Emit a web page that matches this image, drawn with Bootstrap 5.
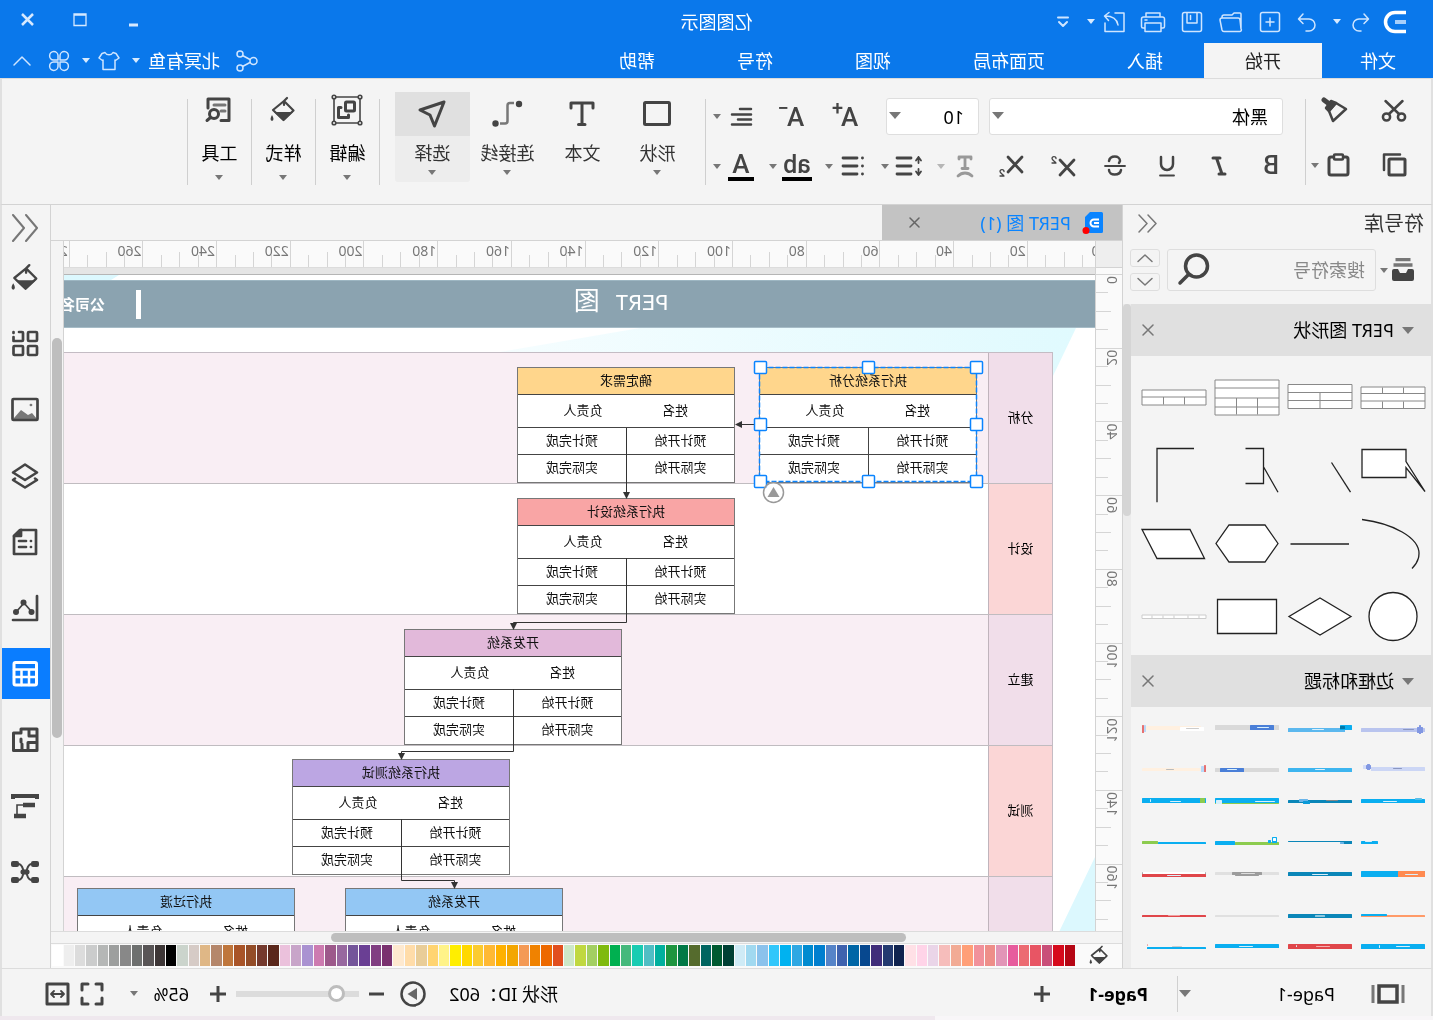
<!DOCTYPE html>
<html lang="zh-CN">
<head>
<meta charset="utf-8">
<meta name="viewport" content="width=device-width, initial-scale=1">
<title>亿图图示</title>
<link href="https://cdn.jsdelivr.net/npm/bootstrap@5.3.0/dist/css/bootstrap.min.css" rel="stylesheet">
<style>
:root{--blue:#0a78eb;--pane:#f4f4f4;--edge:#d3d3d3;--ink:#444}
body{font-family:"Noto Sans","Noto Sans CJK SC",sans-serif;font-size:18px;line-height:24px;color:#111;background:var(--pane);overflow:hidden}
/* the whole window is shown mirrored */
.window{height:100vh;transform:scaleX(-1)}
button,.tab-link{border:0;background:none;padding:0;color:inherit;display:flex;align-items:center;justify-content:center;text-decoration:none}
svg{display:block;flex:none}
.ic{fill:none;stroke:currentColor;stroke-width:2;stroke-linecap:round;stroke-linejoin:round}
.thin{stroke-width:1.5}
.caret{width:0;height:0;border:4px solid transparent;border-top:5px solid #777;border-bottom:0;flex:none}
.caret-lg{border-width:6px;border-top:7px solid #777;border-bottom:0}
.caret-w{border-top-color:#d8ebff;border-width:4px;border-top-width:5px;border-bottom:0}
.titlebar{height:43px;background:var(--blue);color:#cfe5ff}
.titlebar button{width:39px;height:34px}
.half{flex:1 1 0}
.app-title{color:#fff}
.tabbar{height:35px;background:var(--blue);color:#fff;line-height:36px}
.tab-link{padding:0 41px;height:35px;color:#fff}
.tab-link:first-child{padding:0 38px 0 37px}
.tab-link.current{background:var(--pane);color:#222}
.body-edge{border-left:2px solid #e0e0e0;border-right:2px solid #e0e0e0}
.ribbon{height:127px;border-top:1px solid #dcdcdc;border-bottom:1px solid var(--edge);background:var(--pane);color:var(--ink);flex:none}
.rule{width:1px;height:86px;margin-top:20px;background:#cfcfcf;flex:none}
.clip-row{height:54px}
.w74{width:74px}.w38{width:38px}.w46{width:46px}.w52{width:52px}.w54{width:54px}.w40{width:40px}
.clip-group{padding-top:5px;width:125px;flex:none}
.font-group{width:599px;padding:19px 0 0 8px;flex:none}
.font-row{height:37px;padding-left:14px}
.style-row{height:40px;margin-top:11px}
.pick{position:relative}
.pick select{appearance:none;width:100%;height:37px;border:1px solid #dedede;border-radius:3px;background:#fff;padding:0 14px;color:#000}
.pick .caret{position:absolute;right:3px;top:14px;pointer-events:none}
.glyph-a{font:500 26px/30px Roboto,sans-serif;color:var(--ink)}
.glyph-a sup{font-size:20px;top:-9px;left:-2px;line-height:0}
.glyph-b{font:500 25px/30px Roboto,sans-serif;color:var(--ink)}
.inkbar{border-bottom:4px solid #000;line-height:25px;padding:0 1px}
.big{width:75px;margin-top:13px;height:90px;flex-direction:column;justify-content:flex-start;color:#333}
.big .pic{height:44px;width:100%;display:flex;align-items:center;justify-content:center;color:var(--ink)}
.big .cap{margin:5px 0 5px}
.big.on{background:#ededed;border-radius:3px}
.big.on .pic{background:#e0e0e0}
.tall{width:63px;margin-top:9px;height:94px;color:#000}
.tall .cap{margin:9px 0 10px}
main{min-height:0}
.library{width:309px;border-right:1px solid var(--edge);flex:none;overflow:hidden}
.lib-head{height:37px;font-size:20px;padding:0 14px 0 7px;color:#333}
.lib-search{height:62px;padding:7px 0 0 16px;align-items:flex-start}
.search-box{width:209px;height:42px;border:1px solid #dedede;border-radius:3px}
.search-box input{width:164px;border:0;background:none;padding:0 10px;font-size:18px;color:#777;outline:0}
.search-box input::placeholder{color:#888}
.step{width:30px;height:18px;border:1px solid #dedede!important;border-radius:3px}
.lib-scroll{width:8px;background:#ececec}
.lib-scroll div{height:212px;background:#d5d5d5;border-radius:4px}
.sect{height:52px;background:#e0e0e0;color:#000;padding:0 11px 0 17px}
.shape-grid{display:grid;grid-template-columns:repeat(4,73px);grid-auto-rows:73px;padding:5px 0 2px 1px}
.frame-grid{display:grid;grid-template-columns:repeat(4,73px);grid-template-rows:41px 32px 41px 32px 41px 31px 24px;padding:9px 0 0 6px}
.doc-tabs{height:36px;border-bottom:1px solid var(--edge);flex:none}
.doc-tab{width:240px;background:#c3c3c3;color:#0a84ff;padding:0 27px 0 18px}
.doc-tab svg:first-child{margin-right:11px}
.ruler text{font:14px "Noto Sans",sans-serif;fill:#777}
.ruler path{stroke:#d5d5d5;fill:none}
.vruler{width:27px;background:#fafafa;border-right:1px solid var(--edge);flex:none;overflow:hidden}
.corner{height:27px;background:#eee;border-bottom:1px solid var(--edge)}
.hruler{height:27px;background:#fafafa;border-bottom:1px solid #dcdcdc;overflow:hidden;flex:none}
.work{min-height:0;min-width:0}
.board{background:#e5e5e5;padding-top:6px;overflow:hidden;position:relative;min-height:0}
.sheet{border-top:1px solid #b5b5b5;background:#fff;height:100%;padding-top:5px;position:relative}
.sheet-art{position:absolute;left:0;top:0}
.band{position:relative;height:48px;background:#8ba3b0;border-top:1px solid #9db6c2;border-bottom:1px solid #a6bcc7;color:#fff;display:grid;grid-template-columns:948px 6px 5px 31px auto;align-items:center;white-space:nowrap}
.band h1{font:26px/44px "Liberation Mono","Noto Sans CJK SC",monospace;margin:0;text-align:center}
.band h1 .lat{font-size:22px}
.band strong{font-size:15px}
.band-bar{height:29px;background:#fff}
.lanes{position:relative;margin:24px 0 0 42px;border-top:1px solid #c4bcc4;border-left:1px solid #c4bcc4}
.lane{height:131px;border-bottom:1px solid #c0bcc0;background:#fff}
.lane>div:first-child{width:64px;background:#fbd6d6;border-right:1px solid #c0b4bc;font-size:13px;color:#000;padding-bottom:3px}
.lane:nth-child(odd){background:#f9eef4}
.lane:nth-child(odd)>div:first-child{background:#f1deea}
.node{position:absolute;width:218px;border:1px solid #777;background:#fff;font-size:13px;line-height:24px;color:#111;text-align:center}
.node table{width:216px;table-layout:fixed;border-collapse:separate;border-spacing:0}
.node td,.node th{padding:0;font-weight:400;height:27px;border-bottom:1px solid #444;vertical-align:top}
.node .who td{height:33px;line-height:31px}
.node .who td:first-child{padding-left:10px}
.node .who td:last-child{padding-right:22px}
.node .span td:first-child{border-right:1px solid #444}
.node tr:last-child td{border-bottom:0}
.wires{position:absolute;left:0;top:0}
.vbar{width:13px;border-left:1px solid var(--edge);flex:none;padding:97px 1px 0}
.vbar div{height:400px;background:#bebebe;border-radius:5px}
.hbar{height:13px;border-top:1px solid #dcdcdc;border-bottom:1px solid #dcdcdc;padding:1px 0 0 216px;flex:none}
.hbar div{width:575px;height:9px;background:#bebebe;border-radius:5px}
.palette{height:24px;padding:1px 1px 2px 13px;background:#fafafa;flex:none}
.palette .inks{display:flex;gap:1px;flex:1;height:21px;margin-left:14px}
.inks button{flex:1}
.tools{width:49px;color:var(--ink);padding-top:6px;border-left:1px solid var(--edge);overflow:hidden;flex:none}
.tools button{width:48px;height:51px;margin-bottom:15px;padding-left:1px}
.tools button:first-child{height:34px;margin-bottom:7px;color:#777}
.tools .on{background:#0a7dff;color:#fff}
.status{height:48px;border-top:1px solid #dcdcdc;color:#000;padding-top:2px}
.status svg{color:var(--ink)}
.zoomer{appearance:none;width:123px;height:18px;background:linear-gradient(#dcdcdc,#dcdcdc) center/100% 6px no-repeat}
.zoomer::-webkit-slider-thumb{appearance:none;width:17px;height:17px;border-radius:50%;background:#fff;border:3px solid #bdbdbd}
.desk{height:4px;background:linear-gradient(90deg,#f8f6f8 498px,#efe8ee 498px)}
</style>
</head>
<body>
<div class="window d-flex flex-column">
<header class="flex-shrink-0">
 <div class="titlebar d-flex align-items-center">
  <div class="half d-flex align-items-center">
   <svg class="ms-4 me-1" width="26" height="26" viewBox="0 0 26 26" fill="none"><path d="M3 3.500H14a9.500 9.500 0 0 1 0 19H3" stroke="#fff" stroke-width="3.500"/><path d="M3 13H14" stroke="#a8d0fb" stroke-width="4"/></svg>
   <button aria-label="撤销" class="w-auto pe-1 ps-2"><svg class="ic thin" width="22" height="24" viewBox="0 0 22 24"><path d="M7 4 2.500 9 7 13.500M3 9H12a6 6 0 0 1 0 12H10"/></svg></button>
   <span class="caret caret-w mx-1"></span>
   <button aria-label="重做" class="ps-1"><svg class="ic thin" width="22" height="24" viewBox="0 0 22 24"><path d="M15 4 19.500 9 15 13.500M19 9H9a6 6 0 0 0 0 12H12"/></svg></button>
   <button aria-label="新建"><svg class="ic thin" width="22" height="22" viewBox="0 0 22 22"><rect x="1.500" y="1.500" width="19" height="19" rx="2"/><path d="M11 7v8M7 11h8"/></svg></button>
   <button aria-label="打开"><svg class="ic thin" width="24" height="22" viewBox="0 0 24 22"><path d="M2 18V3a1 1 0 0 1 1-1H9l2 2H19a2 2 0 0 1 2 2V7M2 18 3 9a2 2 0 0 1 2-2H21a2 2 0 0 1 2 2L21 19a2 2 0 0 1-2 1.500H3A1.500 1.500 0 0 1 2 18"/></svg></button>
   <button aria-label="保存"><svg class="ic thin" width="22" height="22" viewBox="0 0 22 22"><rect x="1.500" y="1.500" width="19" height="19" rx="2"/><path d="M6 2v10h10V2M12.500 4.500v4"/></svg></button>
   <button aria-label="打印"><svg class="ic thin" width="26" height="22" viewBox="0 0 26 22"><path d="M6 5V2H20V5M5 17H3a1.500 1.500 0 0 1-1.500-1.500V8a2 2 0 0 1 2-2H22.500a2 2 0 0 1 2 2V15.500A1.500 1.500 0 0 1 23 17H21M5 12H21V20.500H5zM19 9H21"/></svg></button>
   <button aria-label="导出"><svg class="ic thin" width="24" height="22" viewBox="0 0 24 22"><path d="M11 2H2V20.500H21V12M8 14C9 8 13 5 21 5M17 1.500 21.500 5 17.500 9.500"/></svg></button>
   <span class="caret caret-w"></span>
   <button aria-label="更多" class="ms-1"><svg class="ic" width="14" height="12" viewBox="0 0 14 12"><path d="M2 1.500H12M3 6 7 10 11 6"/></svg></button>
  </div>
  <div class="app-title">亿图图示</div>
  <div class="half d-flex align-items-center justify-content-end">
   <button class="me-3 pt-2 ps-2" aria-label="最小化"><svg width="12" height="12"><path d="M1 5H10" stroke="#d6e9ff" stroke-width="3"/></svg></button>
   <button aria-label="最大化" class="pb-1 ps-1"><svg width="14" height="14" fill="none" stroke="#d6e9ff"><path d="M1 1H13V12.500H1zM1 2H13" stroke-width="1.300"/></svg></button>
   <button aria-label="关闭" class="ms-3 me-2 pb-1"><svg width="13" height="13" stroke="#d6e9ff" stroke-width="2.500"><path d="M1 1 12 12M12 1 1 12"/></svg></button>
  </div>
 </div>
 <nav class="tabbar d-flex">
  <a class="tab-link" href="#">文件</a><a class="tab-link current" href="#">开始</a><a class="tab-link" href="#">插入</a><a class="tab-link" href="#">页面布局</a><a class="tab-link" href="#">视图</a><a class="tab-link" href="#">符号</a><a class="tab-link" href="#">帮助</a>
  <div class="ms-auto d-flex align-items-center me-2" style="color:#cfe5ff">
   <button aria-label="分享" class="me-3"><svg class="ic thin" width="22" height="22" viewBox="0 0 22 22"><circle cx="4.500" cy="11" r="3.500"/><circle cx="18" cy="4" r="3"/><circle cx="18" cy="18" r="3"/><path d="M8 9.500 15.500 5.500M8 12.500 15.500 16.500"/></svg></button>
   <button class="text-white me-2">北冥有鱼</button><span class="caret caret-w me-2"></span>
   <button aria-label="皮肤" class="mx-1"><svg class="ic thin" width="22" height="20" viewBox="0 0 22 20"><path d="M7 1.500C8.500 4.500 13.500 4.500 15 1.500L18 2.500 21 7 17.500 9.500 17 9V18.500H5V9L4.500 9.500 1 7 4 2.500z"/></svg></button>
   <span class="caret caret-w ms-1 me-2"></span>
   <button aria-label="应用" class="mx-1"><svg class="ic thin" width="22" height="22" viewBox="0 0 22 22"><path d="M10 10H5.500A4.200 4.200 0 1 1 10 5.500zM12 10V5.500A4.200 4.200 0 1 1 16.500 10zM10 12V16.500A4.200 4.200 0 1 1 5.500 12zM12 12H16.500A4.200 4.200 0 1 1 12 16.500z"/></svg></button>
   <button aria-label="收起功能区" class="ms-2 me-1 ps-1"><svg class="ic thin" width="20" height="12" viewBox="0 0 20 12"><path d="M2 10 10 2 18 10"/></svg></button>
  </div>
 </nav>
</header>

<div class="ribbon body-edge d-flex">
 <div class="clip-group">
  <div class="clip-row d-flex">
   <button class="w74" aria-label="剪切"><svg class="ic" style="stroke-width:2.500" width="26" height="26" viewBox="0 0 26 26"><circle cx="5.500" cy="19" r="3.600"/><circle cx="20.500" cy="19" r="3.600"/><path d="M4.500 3 18 16M21.500 3 8 16"/></svg></button>
   <button class="w46" aria-label="格式刷"><svg class="ic" style="stroke-width:2.500" width="28" height="28" viewBox="0 0 28 28"><path d="M2 12 12 6 19 14 15 24z"/><path d="M12 6 17 4 22 11 19 14z" fill="currentColor"/><path d="M20 6 24 3" style="stroke-width:5"/></svg></button>
  </div>
  <div class="clip-row d-flex align-items-center">
   <button class="w74" aria-label="复制"><svg class="ic" style="stroke-width:3" width="26" height="26" viewBox="0 0 26 26"><rect x="2" y="7" width="16" height="16" rx="1"/><path d="M7 2.500H23V18" style="stroke-width:2.500"/></svg></button>
   <button class="w38" aria-label="粘贴"><svg class="ic" style="stroke-width:3" width="26" height="26" viewBox="0 0 26 26"><rect x="3" y="5" width="19" height="18" rx="2"/><rect x="8" y="2.500" width="9" height="5" rx="1" fill="#f4f4f4" style="stroke-width:2.500"/></svg></button><span class="caret"></span>
  </div>
 </div>
 <div class="rule"></div>
 <div class="font-group">
  <div class="font-row d-flex align-items-center">
   <div class="pick" style="width:294px"><select aria-label="字体"><option>黑体</option></select><span class="caret caret-lg"></span></div>
   <div class="pick" style="width:93px;margin:0 13px 0 10px"><select aria-label="字号"><option>10</option></select><span class="caret caret-lg"></span></div>
   <button class="w54 glyph-a ps-1">A<sup>+</sup></button><button class="w54 glyph-a ps-1">A<sup>−</sup></button>
   <button class="w40 ms-1" aria-label="对齐"><svg class="ic" style="stroke-width:2.500" width="24" height="20" viewBox="0 0 24 20"><path d="M2 2H13M2 7.500H21M2 12.500H15M2 17.500H21"/></svg></button><span class="caret"></span>
  </div>
  <div class="style-row d-flex align-items-center">
   <button class="w52 glyph-b" aria-label="加粗">B</button>
   <button class="w52" aria-label="斜体"><svg class="ic" style="stroke-width:3" width="18" height="22" viewBox="0 0 18 22"><path d="M8 3H15M3 19H9M11.500 3 6 19"/></svg></button>
   <button class="w52" aria-label="下划线"><svg class="ic" style="stroke-width:2.500" width="18" height="24" viewBox="0 0 18 24"><path d="M3 3V10a6 6 0 0 0 12 0V3"/><path d="M2 21.500H16" style="stroke-width:1.800"/></svg></button>
   <button class="w52" aria-label="删除线"><svg class="ic" style="stroke-width:2.500" width="24" height="24" viewBox="0 0 24 24"><path d="M18 7C17 1 7 1 7 7L8 9M6 16C7 22 18 22 18 16"/><path d="M2 12H22" style="stroke-width:1.800"/></svg></button>
   <button class="w52" aria-label="上标"><svg class="ic" width="26" height="24" viewBox="0 0 26 24"><path d="M2 6 16 21M16 6 2 21" style="stroke-width:2.800"/><path style="stroke-width:1.300" d="M20 4.500C20 2 24 2 24 4.500 24 6 21 7.500 20 9H24"/></svg></button>
   <button class="w52" aria-label="下标"><svg class="ic" width="26" height="24" viewBox="0 0 26 24"><path style="stroke-width:2.800" d="M2 3 16 18M16 3 2 18"/><path style="stroke-width:1.300" d="M20 17.500C20 15 24 15 24 17.500 24 19 21 20.500 20 22H24"/></svg></button>
   <button class="w40" aria-label="文字方向" style="color:#999"><svg class="ic" style="stroke-width:2.800" width="20" height="24" viewBox="0 0 20 24"><path d="M4 5V3H16V5M10 3V14M7 14.500H13"/><path d="M3 22C7 18 13 18 17 22"/></svg></button><span class="caret me-2 opacity-50"></span>
   <button class="w40" aria-label="行距"><svg class="ic" style="stroke-width:2.800" width="28" height="22" viewBox="0 0 28 22"><path d="M12 3H26M12 11H26M12 19H26"/><path style="stroke-width:1.800" d="M2 5.500 4.500 2 7 5.500M4.500 2V8M2 16.500 4.500 20 7 16.500M4.500 20V14"/></svg></button><span class="caret me-2"></span>
   <button class="w40" aria-label="项目符号"><svg class="ic" style="stroke-width:2.800" width="24" height="22" viewBox="0 0 24 22"><path d="M8 3H22M8 11H22M8 19H22M2.500 3h.1M2.500 11h.1M2.500 19h.1"/></svg></button><span class="caret me-2"></span>
   <button class="w40" aria-label="突出显示"><span class="glyph-b inkbar" style="line-height:25px">ab</span></button><span class="caret me-2"></span>
   <button class="w40" aria-label="字体颜色"><span class="glyph-a inkbar px-1" style="line-height:25px">A</span></button><span class="caret"></span>
  </div>
 </div>
 <div class="rule"></div>
 <div class="d-flex flex-shrink-0" style="margin:0 15px 0 10px">
  <button class="big"><span class="pic"><svg class="ic" style="stroke-width:3" width="30" height="28" viewBox="0 0 30 28"><rect x="2.500" y="2.500" width="25" height="22" rx="1"/></svg></span><span class="cap">形状</span><span class="caret"></span></button>
  <button class="big"><span class="pic"><svg class="ic" style="stroke-width:3" width="28" height="28" viewBox="0 0 28 28"><path d="M3 8V3H25V8M14 3V24M11 24.500H17.500"/></svg></span><span class="cap">文本</span></button>
  <button class="big"><span class="pic"><svg width="32" height="28" viewBox="0 0 32 28" fill="none" stroke="#777" stroke-width="2.500"><path d="M9 3H13Q15.500 3 15.500 5.500V21Q15.500 23.500 18 23.500H23"/><g fill="#444" stroke="none"><circle cx="4" cy="4" r="3.200"/><circle cx="27.500" cy="23.500" r="3.200"/></g></svg></span><span class="cap">连接线</span><span class="caret"></span></button>
  <button class="big on"><span class="pic"><svg class="ic" style="stroke-width:3" width="30" height="30" viewBox="0 0 30 30"><path d="M3 3 27 11 17 16 12.500 27z"/></svg></span><span class="cap">选择</span><span class="caret"></span></button>
 </div>
 <div class="rule"></div>
 <button class="big tall"><span class="pic"><svg class="ic" style="stroke-width:1.600" width="32" height="32" viewBox="0 0 32 32"><path d="M3 3H29V29H3z"/><g fill="#f4f4f4"><circle cx="3" cy="3" r="1.800"/><circle cx="29" cy="3" r="1.800"/><circle cx="3" cy="29" r="1.800"/><circle cx="29" cy="29" r="1.800"/></g><g style="stroke-width:3"><rect x="8.500" y="8" width="9" height="9" rx="1"/><path d="M22 13.500H24.500V23.500H14.500V21"/></g></svg></span><span class="cap">编辑</span><span class="caret"></span></button>
 <div class="rule"></div>
 <button class="big tall"><span class="pic"><svg width="26" height="28" viewBox="0 0 26 28"><use href="#bucket"/></svg></span><span class="cap">样式</span><span class="caret"></span></button>
 <div class="rule"></div>
 <button class="big tall"><span class="pic"><svg class="ic" style="stroke-width:3" width="30" height="28" viewBox="0 0 30 28"><path d="M13 24.500H5V3H26V12"/><path d="M9 9H20M9 15H13" stroke="#777"/><circle cx="20" cy="18" r="4.500"/><path d="M23.500 21.500 27 24.500"/></svg></span><span class="cap">工具</span><span class="caret"></span></button>
 <div class="rule"></div>
</div>

<main class="body-edge d-flex flex-fill">
 <aside class="library d-flex flex-column">
  <div class="lib-head d-flex align-items-center justify-content-between flex-shrink-0">符号库<button aria-label="收起"><svg class="ic thin" style="stroke:#777" width="20" height="20" viewBox="0 0 20 20"><path d="M9 1 1 9.500 9 18M18 1 10 9.500 18 18"/></svg></button></div>
  <div class="lib-search d-flex flex-shrink-0">
   <button aria-label="符号库" style="height:42px"><svg width="24" height="24" viewBox="0 0 24 24"><path d="M4.500 1.500H19.500M2.500 7H21.500" stroke="#777" stroke-width="3.500"/><path d="M1 13a2 2 0 0 1 2-2H7L9 15H15L17 11H21a2 2 0 0 1 2 2V21a2 2 0 0 1-2 2H3a2 2 0 0 1-2-2z" fill="#444"/></svg></button>
   <span class="caret" style="margin:19px 4px 0 3px"></span>
   <div class="search-box d-flex align-items-center"><input aria-label="搜索符号" placeholder="搜索符号"><button aria-label="搜索"><svg class="ic" style="stroke:#444;stroke-width:3.500" width="36" height="36" viewBox="0 0 36 36"><circle cx="14.500" cy="14" r="11"/><path d="M22.500 22.500 31 31"/></svg></button></div>
   <div class="d-flex flex-column" style="gap:6px;margin-left:7px"><button class="step" aria-label="上"><svg class="ic thin" style="stroke:#777" width="18" height="10" viewBox="0 0 18 10"><path d="M2 8.500 9 2 16 8.500"/></svg></button><button class="step" aria-label="下"><svg class="ic thin" style="stroke:#777" width="18" height="10" viewBox="0 0 18 10"><path d="M2 1.500 9 8 16 1.500"/></svg></button></div>
  </div>
  <div class="d-flex work flex-fill">
   <div style="width:300px">
    <div class="sect d-flex align-items-center"><span class="caret caret-lg me-2"></span>PERT 图形状<button class="ms-auto" aria-label="关闭"><svg class="ic thin" style="stroke:#777" width="12" height="12"><path d="M1 1 11 11M11 1 1 11"/></svg></button></div>
    <div class="shape-grid" id="shapes"></div>
    <div class="sect d-flex align-items-center"><span class="caret caret-lg me-2"></span>边框和标题<button class="ms-auto" aria-label="关闭"><svg class="ic thin" style="stroke:#777" width="12" height="12"><path d="M1 1 11 11M11 1 1 11"/></svg></button></div>
    <div class="frame-grid" id="frames"></div>
   </div>
   <div class="lib-scroll"><div></div></div>
  </div>
 </aside>

 <section class="d-flex flex-column flex-fill work">
  <div class="doc-tabs d-flex">
   <div class="doc-tab d-flex align-items-center"><svg width="22" height="24" viewBox="0 0 22 24"><path d="M1 2.500A1.500 1.500 0 0 1 2.500 1H14L19 6V22H2.500A1.500 1.500 0 0 1 1 20.500z" fill="#0a84ff"/><path d="M5 8.500H10a3.500 3.500 0 0 1 0 7H5M5 12H10" fill="none" stroke="#fff" stroke-width="2"/><circle cx="18" cy="19.500" r="3.500" fill="#f00"/></svg>PERT 图 (1)<button class="ms-auto" aria-label="关闭标签"><svg class="ic thin m-0" style="stroke:#666" width="11" height="11"><path d="M1 1 10 10M10 1 1 10"/></svg></button></div>
  </div>
  <div class="d-flex flex-fill work">
   <div class="vruler"><div class="corner"></div><svg class="ruler" id="vruler" width="26" height="663"></svg></div>
   <div class="flex-fill d-flex flex-column work">
    <div class="hruler"><svg class="ruler" id="hruler" width="1100" height="26"></svg></div>
    <div class="board flex-fill">
     <div class="sheet">
      <svg class="sheet-art" width="1400" height="700"><defs><linearGradient id="sky"><stop offset="0" stop-color="#e0fafe"/><stop offset="1" stop-color="#fbfeff"/></linearGradient></defs><path d="M19 53 43 103H747L455 53z" fill="url(#sky)"/><path d="M0 582 36 657H0zM976 0H1300V5H984z" fill="#dcf8fe"/></svg>
      <div class="band"><h1><span class="lat">PERT</span> 图</h1><span></span><span class="band-bar"></span><span></span><strong>公司名称</strong></div>
      <div class="lanes">
       <div class="lane d-flex"><div class="d-flex align-items-center justify-content-center">分析</div></div>
       <div class="lane d-flex"><div class="d-flex align-items-center justify-content-center">设计</div></div>
       <div class="lane d-flex"><div class="d-flex align-items-center justify-content-center">建立</div></div>
       <div class="lane d-flex"><div class="d-flex align-items-center justify-content-center">测试</div></div>
       <div class="lane d-flex"><div></div></div>
      </div>
     </div>
     <div id="nodes"></div>
     <svg class="wires" width="1400" height="700">
      <defs><marker id="tip" viewBox="0 0 7 7" refX="6" refY="3.500" markerWidth="7" markerHeight="7" orient="auto"><path d="M0 0 7 3.500 0 7z" fill="#333"/></marker></defs>
      <g fill="none" stroke="#333"><path d="M341 156.500H359" marker-end="url(#tip)"/><path d="M468.500 160V230" marker-end="url(#tip)"/><path d="M468.500 290V354.500H581.500V361" marker-end="url(#tip)"/><path d="M581.500 421V483.500H693.500V491" marker-end="url(#tip)"/><path d="M693.500 551V612.500H640.500V620" marker-end="url(#tip)"/></g>
      <rect x="118.500" y="99.500" width="217" height="114" fill="none" stroke="#0a84ff" stroke-width="1.500" stroke-dasharray="5 2"/>
      <g fill="#fff" stroke="#0a84ff" stroke-width="1.500" id="grips"></g>
      <circle cx="321.500" cy="224.500" r="10" fill="#fff" fill-opacity=".6" stroke="#999" stroke-width="1.500"/><path d="M315.500 229H327.500L321.500 219z" fill="#999"/>
     </svg>
    </div>
   </div>
   <div class="vbar"><div></div></div>
  </div>
  <div class="hbar"><div></div></div>
  <div class="palette d-flex align-items-center"><button aria-label="填充颜色" style="color:#444"><svg width="20" height="21" viewBox="0 0 26 28"><use href="#bucket"/></svg></button><div class="inks" id="inks"></div></div>
 </section>

 <aside class="tools">
  <button aria-label="展开"><svg class="ic" width="28" height="28" viewBox="0 0 28 28"><path d="M13 1 2 14 13 27M26 1 15 14 26 27"/></svg></button>
  <button aria-label="样式"><svg width="28" height="30" viewBox="0 0 26 28"><use href="#bucket"/></svg></button>
  <button aria-label="符号"><svg class="ic" style="stroke-width:2.700" width="28" height="28" viewBox="0 0 28 28"><rect x="2" y="2" width="9" height="9" rx="1"/><rect x="2" y="16" width="9" height="9" rx="1"/><rect x="16" y="16" width="9.500" height="9" rx="1"/><path d="M20 2H17a1 1 0 0 0-1 1V10a1 1 0 0 0 1 1H25.500V7M25.500 2V3"/></svg></button>
  <button aria-label="图片"><svg class="ic" style="stroke-width:2.700" width="28" height="26" viewBox="0 0 28 26"><path d="M2 22 7 16 11 18 18 13 25 21V23H2z" fill="#777" stroke="none"/><rect x="1.500" y="2" width="25" height="21" rx="1"/><path d="M8 8h.1" stroke="#777"/></svg></button>
  <button aria-label="图层"><svg class="ic" style="stroke-width:2.600" width="28" height="28" viewBox="0 0 28 28"><path d="M14 2.500 26 10.500 14 18 2 10.500zM4 16.500 2 18 14 25.500 26 18 24 16.500"/></svg></button>
  <button aria-label="备注"><svg class="ic" style="stroke-width:2.700" width="26" height="28" viewBox="0 0 26 28"><path d="M2 2H18L24 8V26H2z"/><path d="M17 2V8H24z" fill="currentColor"/><path d="M7 13h.1M12 13H19M7 19h.1M12 19H19"/></svg></button>
  <button aria-label="图表"><svg class="ic" style="stroke-width:2.700" width="28" height="28" viewBox="0 0 28 28"><path d="M2 2V26H26"/><path d="M8 17 15 9 22 17" style="stroke-width:1.800"/><g fill="currentColor" stroke="none"><circle cx="7.500" cy="18" r="3"/><circle cx="15.500" cy="8.500" r="3"/><circle cx="23" cy="18" r="3"/></g></svg></button>
  <button class="on" aria-label="表格"><svg class="ic" style="stroke-width:3" width="28" height="28" viewBox="0 0 28 28"><rect x="2.500" y="2.500" width="22.500" height="22.500" rx="1.500"/><path d="M3 9.500H25M3 17H25M10 10V25M17.500 10V25" style="stroke-width:2.500"/></svg></button>
  <button aria-label="平面图"><svg class="ic" style="stroke-width:3" width="28" height="26" viewBox="0 0 28 26"><path d="M2 2H18V6H25.500V23.500H2zM10 2V9H3M11 15.500H3M11 15.500V22M17 17V23M18 12V15"/></svg></button>
  <button aria-label="甘特图"><svg width="28" height="28" viewBox="0 0 28 28" fill="none" stroke="currentColor"><path d="M2 7V4H26V7" stroke-width="4"/><path d="M5 13H16M15 13H22V22" stroke-width="1.600"/><path d="M4 13H16M13 24H25" stroke-width="4.500"/></svg></button>
  <button aria-label="思维导图"><svg width="28" height="26" viewBox="0 0 28 26" fill="none" stroke="currentColor" stroke-width="2"><path d="M7 5C13 5 11 13 14 13S15 21 21 21M21 5C15 5 17 13 14 13S13 21 7 21"/><g fill="currentColor" stroke="none"><rect y="2" width="8" height="6" rx="2"/><rect x="20" y="2" width="8" height="6" rx="2"/><rect y="18" width="8" height="6" rx="2"/><rect x="20" y="18" width="8" height="6" rx="2"/><rect x="9.500" y="10.500" width="9" height="5" rx="2"/></g></svg></button>
 </aside>
</main>

<footer class="flex-shrink-0">
 <div class="status body-edge d-flex align-items-center">
  <button aria-label="页面视图" style="margin:0 36px 0 26px"><svg width="34" height="20" viewBox="0 0 34 20" fill="none"><path d="M2 1V19M32 1V19" stroke="#777" stroke-width="3"/><rect x="8" y="2" width="18" height="16" stroke="#444" stroke-width="3.500"/></svg></button>
  <span style="width:144px">Page-1</span>
  <span class="caret caret-lg"></span><span style="width:1px;height:36px;background:#d0d0d0;margin-left:1px"></span>
  <strong style="margin:0 38px 0 29px">Page-1</strong>
  <button aria-label="添加页面"><svg width="16" height="16" stroke="currentColor" stroke-width="3"><path d="M8 0V16M0 8H16"/></svg></button>
  <div class="d-flex align-items-center ms-auto">
   <span style="width:131px;white-space:pre">形状 ID：602</span>
   <button aria-label="演示"><svg width="28" height="28" viewBox="0 0 28 28"><circle cx="14" cy="14" r="11.500" fill="none" stroke="#444" stroke-width="2.500"/><path d="M10 8V20L19.500 14z" fill="#666"/></svg></button>
   <button aria-label="缩小" style="margin:0 10px 0 15px"><svg width="15" height="16" stroke="currentColor" stroke-width="3"><path d="M0 8H15"/></svg></button>
   <input class="zoomer" type="range" min="0" max="100" value="13" aria-label="缩放">
   <button aria-label="放大" style="margin:0 21px 0 10px"><svg width="16" height="16" stroke="currentColor" stroke-width="3"><path d="M8 0V16M0 8H16"/></svg></button>
   <span style="width:51px">65%</span><span class="caret"></span>
   <button aria-label="全屏" style="margin:0 10px 0 26px"><svg class="ic" style="stroke-width:3" width="24" height="24" viewBox="0 0 24 24"><path d="M2 8V2H8M16 2H22V8M22 16V22H16M8 22H2V16"/></svg></button>
   <button aria-label="适应宽度" style="margin-right:43px"><svg class="ic" style="stroke-width:3" width="25" height="24" viewBox="0 0 25 24"><rect x="2" y="2" width="21" height="20"/><path d="M6.500 12H18.500M9 9 6 12 9 15M16 9 19 12 16 15" style="stroke-width:1.800"/></svg></button>
  </div>
 </div>
 <div class="desk"></div>
</footer>
</div>

<svg width="0" height="0" class="position-absolute"><symbol id="bucket" viewBox="0 0 26 28"><path d="M12 5 2.500 14.500 12.500 24 23 14zM12 5 9 2M12 5V9" fill="none" stroke="currentColor" stroke-width="2.200" stroke-linejoin="round" stroke-linecap="round"/><path d="M3 16H22L12.500 25z" fill="currentColor"/><path d="M24 19q3 5 0 6-3-1 0-6" fill="currentColor"/></symbol></svg>

<script src="https://cdn.jsdelivr.net/npm/bootstrap@5.3.0/dist/js/bootstrap.bundle.min.js"></script>
<script>
const el = id => document.getElementById(id);
// shape library, drawn round the centre of each cell
const G = 'stroke="#888" stroke-width="1" ', K = 'stroke="#222" stroke-width="1.3" ';
const shapes = [
 G+'d="M-32-10.500H32V11H-32zM-32-4H32M-32 3.500H32M-10.500-10V-4M10.500-10V-4M-10.500 4V11M10.500 4V11"',
 G+'d="M-32-13H32V11H-32zM-32-5H32M-32 3H32M0-5V11"',
 G+'d="M-32-17.500H32V17.500H-32zM-32-9.500H32M-32 .5H32M-32 9.500H32M-10.500 .5V17M10.500 .5V17"',
 G+'d="M-32-7.500H32V7.500H-32zM-32-.5H32M-10.500-.5V7M10.500-.5V7"',
 K+'d="M-13-21H31V7H-13V-3L-32 21-13-9z"', K+'d="M-11.500-8-30.500 21.700"',
 K+'style="fill:none" d="M1.500-22H-16.500V13H1.500M-16.500-3.700-31 21.700"', K+'style="fill:none" d="M-20-22H17V31.700"',
 K+'style="fill:none" d="M31-24C0-20-26-6-26 10-26 16-24 20-19 25"', K+'d="M-29 .5H29.500"',
 K+'d="M-31 0-18-18.500H18L31 0 18 18.500H-18z"', K+'d="M32-14H-16L-30.500 15H17z"',
 K+'d="M-24 0a24 24 0 1 0 48 0a24 24 0 1 0-48 0"', K+'d="M-31 0 0-18.500 31 0 0 18.500z"',
 K+'d="M-29.500-17H29.500V17H-29.500z"', 'stroke="#ccc" d="M-32-1.500H32V2H-32zM-25-1V2M-14-1V2M0-1V2M11-1V2M22-1V2"'];
el('shapes').innerHTML = shapes.map(s => `<svg width="73" height="73" viewBox="-37 -36.500 73 73"><path fill="#fff" ${s}/></svg>`).join('');

// frame thumbnails: [x, y, w, h, colour] boxes
const B='#0aaef0', D='#0a86b8', R='#e0464a', L='#d9d9d9', N='#8ccb4e', M='#4a7fd8', W='#d8f0fc', O='#ff8a50';
const frames = [
 [[0,12,64,4,'#b9c4ee'],[2,11,6,6,'#8197e2'],[4,9,2,9,'#8197e2'],[11,13,11,1,'#8a96c0']],
 [[7,12,57,4,'#5cb8ee'],[0,9,12,5,B],[7,10,5,3,'#0078a8'],[28,13,12,1,W]],
 [[0,9,64,5,L],[5,9,24,5,M],[10,11,12,1,W]],
 [[5,10,55,4,'#fff0e0'],[2,11,24,4,'#fff'],[7,12,13,1,'#ccc'],[60,9,2,7,'#b8d8f8'],[62,9,2,8,'#e67070']],
 [[0,10,54,4,'#ccd6f5'],[54,8,5,4,'#8197e2'],[55,7,3,6,'#8197e2'],[59,8,3,4,'#d3dcf8'],[23,11,9,1,'#8a96c0']],
 [[0,11,64,4,'#3db5ef'],[27,12,10,1,W]], [[0,11,64,4,L],[35,11,24,4,M],[42,12,10,1,W]],
 [[5,11,59,3,'#fff0e0'],[32,12,8,1,'#bbb'],[0,8,2,7,'#e67070'],[2,9,3,6,'#b8d8f8']],
 [[0,10,64,4,B],[3,9,7,2,'#59bfe8'],[28,12,14,1,W]], [[0,11,64,3,D],[44,10,9,3,'#6ab5ea'],[42,12,7,3,'#0a9ad8'],[14,11,12,1,'#888']],
 [[0,9,64,5,B],[0,14,64,1,N],[57,11,6,4,W],[4,12,20,1,W]], [[0,9,64,5,B],[1,9,5,5,N],[25,12,11,1,W],[55,10,1,3,W]],
 [[47,11,17,3,B],[53,11,7,1,W]], [[0,11,64,1,D],[0,11,10,3,D],[8,12,4,2,'#6ab5ea']],
 [[0,12,44,3,N],[44,11,20,4,B],[2,7,5,6,B],[3,8,3,3,'#fff'],[8,10,3,3,B]], [[0,12,48,2,B],[48,11,16,3,N]],
 [[0,9,64,6,B],[0,9,27,6,O],[7,12,13,1,W]], [[0,10,64,4,D],[24,12,16,1,W]],
 [[0,10,64,3,'#e0e0e0'],[17,10,30,3,'#9c9c9c'],[20,13,24,1,'#9c9c9c'],[24,11,14,1,'#ddd']], [[0,10,64,2,'#fff'],[0,10,1,3,'#aaa'],[63,10,1,3,'#aaa'],[0,12,64,3,R],[25,13,14,1,W]],
 [[0,12,64,2,'#ff9a68'],[38,11,26,2,B]], [[0,11,64,4,D],[27,12,10,2,'#8cc8e0']], [[0,12,64,2,'#e0e0e0']], [[0,12,64,2,R],[26,12,12,1,'#f0a0a0']],
 [[0,10,64,5,B],[15,12,14,1,W],[45,11,1,3,W]], [[0,10,64,5,R],[22,12,14,1,'#f6b0b0'],[55,11,1,2,W]], [[0,10,64,4,B],[26,12,14,1,W]], [[0,13,59,2,B],[24,12,10,1,'#ccc'],[58,10,1,2,'#e9a0a0']]];
el('frames').innerHTML = frames.map(f => `<svg width="64" height="24">${f.map(([x,y,w,h,c]) => `<rect x="${x}" y="${y}" width="${w}" height="${h}" rx=".5" fill="${c}"/>`).join('')}</svg>`).join('');

// rulers, one major tick every 20 mm
const step = 73.7;
let d = '', t = '';
for (let i = 0; i < 15; i++) {
  const x = -6.5 + i * step;
  d += `M${Math.round(x)+.5} 0V26`;
  [1,2,3].forEach(k => d += `M${Math.round(x + k*step/4)+.5} ${k == 2 ? 11 : 14}V26`);
  t += `<text x="${x + 2}" y="15">${i * 20}</text>`;
}
el('hruler').innerHTML = `<path d="${d}"/>${t}`;
d = 'M0 6.500H26'; t = '';
for (let i = 0; i < 9; i++) {
  const y = 6 + i * step;
  d += `M0 ${Math.round(y)+.5}H26`;
  [1,2,3].forEach(k => d += `M${k == 2 ? 11 : 14} ${Math.round(y + k*step/4)+.5}H26`);
  t += `<text transform="translate(15 ${y + 2}) rotate(-90)" text-anchor="end">${i * 20}</text>`;
}
el('vruler').innerHTML = `<path d="${d}"/>${t}`;

// PERT nodes: left, top, title, heading colour, whether the date rows are in view
el('nodes').innerHTML = [
 [118,99,'执行系统分析','#ffd68c',1],[360,99,'确定需求','#ffd68c',1],[360,230,'执行系统设计','#f9a5a5',1],
 [473,361,'开发系统','#e2b9da',1],[585,491,'执行系统测试','#bca6e3',1],[532,620,'开发系统','#93c7f4',0],[800,620,'执行过渡','#93c7f4',0]
].map(([x,y,name,c,full]) => `<div class="node" style="left:${x}px;top:${y}px"><table><tr><th colspan="2" style="background:${c}">${name}</th></tr><tr class="who"><td>姓名</td><td>负责人</td></tr>${full ? '<tr class="span"><td>预计开始</td><td>预计完成</td></tr><tr class="span"><td>实际开始</td><td>实际完成</td></tr>' : ''}</table></div>`).join('');
let g = '';
[99.5,156.5,213.5].forEach((y,r) => [118.5,226.5,334.5].forEach((x,c) => { if (r != 1 || c != 1) g += `<rect x="${x-6}" y="${y-6}" width="12" height="12" rx="1"/>`; }));
el('grips').innerHTML = g;

el('inks').innerHTML = ('b50614 d60a1c c94f79 e85564 ec6b72 e75c9d e295b7 ee8e89 f1919b ff9f78 f2ab95 f6bdbb ead5e8 ffd4e8 ffe0e6 10234f 243a70 402d7a 07488f 0066a6 3f62ae 5684c8 007fcf 008bd0 2fa8e3 00b2f0 31c7fb 8bc2ec a1d9f0 cfebf6 004034 005a31 006560 556b2d 007946 1d953f 00b09e 50bec4 19ccb2 45b97c 00b050 7fba0e a3cf62 c0d840 cde8c8 e14f1f ed6900 f08200 f49a55 f3a600 ffb100 ffb934 fbcb30 ffd800 ffee00 fff388 ffd471 e9cd98 ffdca9 fee9cf 7a316f 813e82 6a3f94 74559a 98689f 9d598b cd7bb0 aa92d1 c8a5c9 ebc1dc 5a271b 753a2e 944d28 a95428 bf763c b5876b dfb786 d6cbc6 cbd4cc 000000 3d3636 595556 6e706f 888888 9d9f9e b5b7b6 cbcccc dcdcdc eeeeee ffffff')
 .split(' ').map(c => `<button aria-label="#${c}" style="background:#${c}"></button>`).join('');
</script>
</body>
</html>
